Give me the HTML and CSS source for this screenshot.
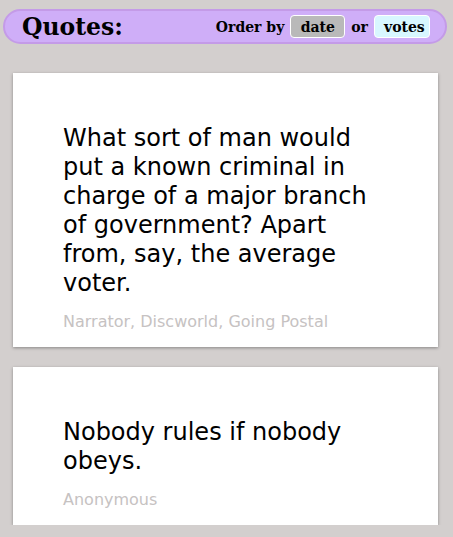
FILE: index.html
```html
<!DOCTYPE html>
<html>
<head>
<meta charset="utf-8">
<link rel="stylesheet" href="styles.css">
</head>
<body>
<header class="bar">
  <h1 class="title">Quotes:</h1>
  <div class="order">
    <span class="label">Order by</span>
    <button class="btn btn-date">date</button>
    <span class="label">or</span>
    <button class="btn btn-votes">votes</button>
  </div>
</header>
<main class="list">
  <article class="card">
    <p class="quote">What sort of man would put a known criminal in charge of a major branch of government? Apart from, say, the average voter.</p>
    <p class="author">Narrator, Discworld, Going Postal</p>
  </article>
  <article class="card">
    <p class="quote">Nobody rules if nobody obeys.</p>
    <p class="author">Anonymous</p>
  </article>
</main>
</body>
</html>
```

FILE: styles.css
```css
html, body {
  margin: 0;
  padding: 0;
  background: #d3cfce;
}
body {
  padding: 9px 6px 0 3px;
  font-family: "DejaVu Sans", sans-serif;
}
.bar {
  display: flex;
  align-items: center;
  justify-content: space-between;
  height: 31px;
  background: #cfaef8;
  border: 2px solid #c49be8;
  border-radius: 18px;
  padding: 0 15px 0 17px;
}
.title {
  margin: 0;
  font-family: "DejaVu Serif", serif;
  font-weight: bold;
  font-size: 23.5px;
  color: #000;
}
.order {
  display: flex;
  align-items: center;
  gap: 6px;
  font-family: "DejaVu Serif", serif;
  font-weight: bold;
  font-size: 14px;
}
.btn {
  font-family: "DejaVu Serif", serif;
  font-weight: bold;
  font-size: 14px;
  color: #000;
  height: 23px;
  padding: 0 9px;
  border: 1px solid #fff;
  border-radius: 4px;
  margin: 0;
}
.btn-date {
  background: #b9b9b9;
  width: 55px;
}
.btn-votes {
  background: #d8f7ff;
  width: 56px;
}
.list {
  display: flex;
  flex-direction: column;
  gap: 20px;
  margin: 29px 9px 0 10px;
}
.card {
  background: #fff;
  box-shadow: 0 1px 3px rgba(0,0,0,0.35);
  padding: 51px 50px 16px 50px;
}
.quote {
  margin: 0;
  font-size: 24px;
  line-height: 29px;
  color: #000;
}
.author {
  margin: 14px 0 0;
  font-size: 16px;
  color: #c6c2c2;
}
```
